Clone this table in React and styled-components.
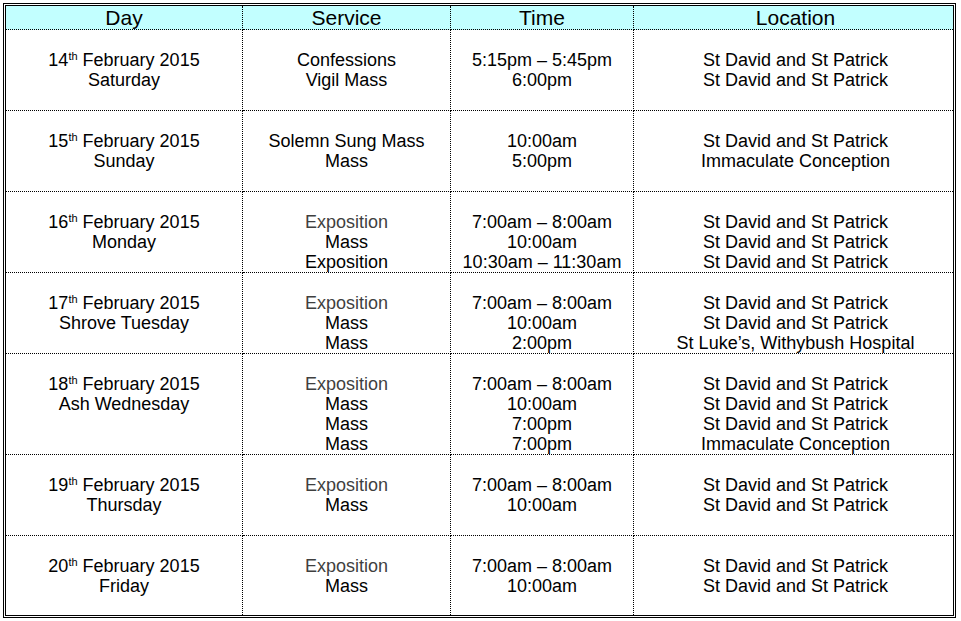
import React from "react";
import styled, { createGlobalStyle } from "styled-components";

const GlobalStyle = createGlobalStyle`
  body {
    margin: 0;
    background: #fff;
    font-family: "Liberation Sans", Arial, Helvetica, sans-serif;
    color: #000;
  }
`;

const days = [
  {
    num: "14",
    date: "February 2015",
    name: "Saturday",
    items: [
      ["Confessions", "5:15pm – 5:45pm", "St David and St Patrick"],
      ["Vigil Mass", "6:00pm", "St David and St Patrick"],
    ],
  },
  {
    num: "15",
    date: "February 2015",
    name: "Sunday",
    items: [
      ["Solemn Sung Mass", "10:00am", "St David and St Patrick"],
      ["Mass", "5:00pm", "Immaculate Conception"],
    ],
  },
  {
    num: "16",
    date: "February 2015",
    name: "Monday",
    muted: true,
    items: [
      ["Exposition", "7:00am – 8:00am", "St David and St Patrick"],
      ["Mass", "10:00am", "St David and St Patrick"],
      ["Exposition", "10:30am – 11:30am", "St David and St Patrick"],
    ],
  },
  {
    num: "17",
    date: "February 2015",
    name: "Shrove Tuesday",
    muted: true,
    items: [
      ["Exposition", "7:00am – 8:00am", "St David and St Patrick"],
      ["Mass", "10:00am", "St David and St Patrick"],
      ["Mass", "2:00pm", "St Luke’s, Withybush Hospital"],
    ],
  },
  {
    num: "18",
    date: "February 2015",
    name: "Ash Wednesday",
    muted: true,
    items: [
      ["Exposition", "7:00am – 8:00am", "St David and St Patrick"],
      ["Mass", "10:00am", "St David and St Patrick"],
      ["Mass", "7:00pm", "St David and St Patrick"],
      ["Mass", "7:00pm", "Immaculate Conception"],
    ],
  },
  {
    num: "19",
    date: "February 2015",
    name: "Thursday",
    muted: true,
    items: [
      ["Exposition", "7:00am – 8:00am", "St David and St Patrick"],
      ["Mass", "10:00am", "St David and St Patrick"],
    ],
  },
  {
    num: "20",
    date: "February 2015",
    name: "Friday",
    muted: true,
    items: [
      ["Exposition", "7:00am – 8:00am", "St David and St Patrick"],
      ["Mass", "10:00am", "St David and St Patrick"],
    ],
  },
];

const Schedule = () => {
  return (
    <Wrapper>
      <GlobalStyle />
      <Grid>
        <HeadCell>Day</HeadCell>
        <HeadCell>Service</HeadCell>
        <HeadCell>Time</HeadCell>
        <HeadCell $last>Location</HeadCell>
        {days.map((d, i) => {
          const lastRow = i === days.length - 1;
          return (
            <React.Fragment key={d.num}>
              <Cell $lastRow={lastRow}>
                <Line>
                  {d.num}
                  <Sup>th</Sup> {d.date}
                </Line>
                <Line>{d.name}</Line>
              </Cell>
              <Cell $lastRow={lastRow}>
                {d.items.map((it, j) => (
                  <Line key={j} $muted={d.muted && j === 0}>
                    {it[0]}
                  </Line>
                ))}
              </Cell>
              <Cell $lastRow={lastRow}>
                {d.items.map((it, j) => (
                  <Line key={j}>{it[1]}</Line>
                ))}
              </Cell>
              <Cell $lastRow={lastRow} $last>
                {d.items.map((it, j) => (
                  <Line key={j}>{it[2]}</Line>
                ))}
              </Cell>
            </React.Fragment>
          );
        })}
      </Grid>
    </Wrapper>
  );
};

const Wrapper = styled.div`
  width: 953px;
  margin: 3px;
  border: 3px double #000;
  box-sizing: border-box;
`;

const Grid = styled.div`
  display: grid;
  grid-template-columns: 237px 208px 183px 1fr;
`;

const HeadCell = styled.div`
  box-sizing: border-box;
  height: 24px;
  background: #c2ffff;
  border-bottom: 1px dotted #000;
  border-right: ${(p) => (p.$last ? "none" : "1px dotted #000")};
  padding-left: ${(p) => (p.$last ? "4px" : "0")};
  font-size: 21px;
  line-height: 23px;
  text-align: center;
`;

const Cell = styled.div`
  box-sizing: border-box;
  min-height: ${(p) => (p.$lastRow ? "79px" : "81px")};
  padding-top: 20px;
  padding-left: ${(p) => (p.$last ? "4px" : "0")};
  border-bottom: ${(p) => (p.$lastRow ? "none" : "1px dotted #000")};
  border-right: ${(p) => (p.$last ? "none" : "1px dotted #000")};
  text-align: center;
  font-size: 18px;
  line-height: 20px;
`;

const Line = styled.div`
  white-space: nowrap;
  color: ${(p) => (p.$muted ? "#3f3f3f" : "#000")};
`;

const Sup = styled.sup`
  font-size: 11px;
  line-height: 0;
  vertical-align: 6px;
`;

export default Schedule;
